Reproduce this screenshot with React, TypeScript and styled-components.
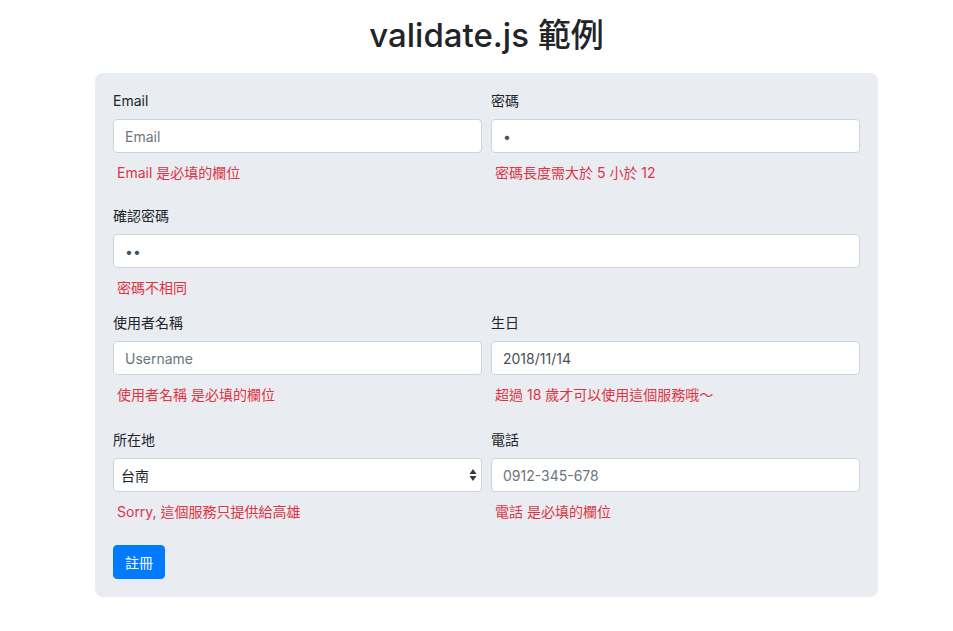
import React from "react"
import styled, { createGlobalStyle } from "styled-components"

const GlobalStyle = createGlobalStyle`
  html, body {
    margin: 0;
    padding: 0;
    background: #ffffff;
  }
  body {
    font-family: Inter, "Noto Sans CJK TC", sans-serif;
    font-size: 14px;
    color: #212529;
  }
  * {
    box-sizing: border-box;
  }
`

const Page = styled.div`
  padding: 14px 0 40px 20px;
`

const Container = styled.div`
  width: 783px;
  margin: 0 auto;
`

const Title = styled.h1`
  margin: 0 0 16px;
  font-size: 33px;
  font-weight: 500;
  line-height: 43px;
  text-align: center;
  color: #212529;
`

const Card = styled.form`
  background: #e9ecf1;
  border-radius: 8px;
  padding: 17px 18px 18px;
`

const Row = styled.div<{ $cols: number; $after: number }>`
  display: grid;
  grid-template-columns: repeat(${({ $cols }) => $cols}, 1fr);
  column-gap: 9px;
  margin-bottom: ${({ $after }) => $after}px;
`

const Group = styled.div`
  display: flex;
  flex-direction: column;
`

const Label = styled.label`
  display: block;
  line-height: 21px;
  margin-bottom: 8px;
  color: #212529;
`

const Input = styled.input`
  width: 100%;
  height: 34px;
  padding: 0 11px;
  border: 1px solid #ced4da;
  border-radius: 4px;
  background: #ffffff;
  font-family: inherit;
  font-size: 14px;
  color: #495057;
  outline: none;

  &::placeholder {
    color: #6c757d;
  }
`

const SelectWrap = styled.div`
  position: relative;
`

const Select = styled.select`
  width: 100%;
  height: 34px;
  padding: 0 24px 0 7px;
  border: 1px solid #ced4da;
  border-radius: 4px;
  background: #ffffff;
  font-family: inherit;
  font-size: 14px;
  color: #212529;
  appearance: none;
  outline: none;
`

const SelectArrows = styled.svg`
  position: absolute;
  right: 5px;
  top: 50%;
  transform: translateY(-50%);
  pointer-events: none;
`

const Error = styled.div`
  margin-top: 9px;
  padding-left: 4px;
  line-height: 21px;
  color: #dc3545;
`

const SubmitButton = styled.button`
  height: 34px;
  padding: 0 11px;
  border: 1px solid #007bff;
  border-radius: 4px;
  background: #007bff;
  color: #ffffff;
  font-family: inherit;
  font-size: 14px;
  cursor: pointer;
`

type FieldProps = {
  label: string
  error: string
  children: React.ReactNode
}

const Field = ({ label, error, children }: FieldProps) => (
  <Group>
    <Label>{label}</Label>
    {children}
    <Error>{error}</Error>
  </Group>
)

export default function App() {
  return (
    <>
      <GlobalStyle />
      <Page>
        <Container>
          <Title>validate.js 範例</Title>
          <Card onSubmit={(e) => e.preventDefault()}>
            <Row $cols={2} $after={22}>
              <Field label="Email" error="Email 是必填的欄位">
                <Input type="email" placeholder="Email" />
              </Field>
              <Field label="密碼" error="密碼長度需大於 5 小於 12">
                <Input type="password" defaultValue="a" />
              </Field>
            </Row>

            <Row $cols={1} $after={14}>
              <Field label="確認密碼" error="密碼不相同">
                <Input type="password" defaultValue="ab" />
              </Field>
            </Row>

            <Row $cols={2} $after={24}>
              <Field label="使用者名稱" error="使用者名稱 是必填的欄位">
                <Input type="text" placeholder="Username" />
              </Field>
              <Field label="生日" error="超過 18 歲才可以使用這個服務哦～">
                <Input type="text" defaultValue="2018/11/14" />
              </Field>
            </Row>

            <Row $cols={2} $after={23}>
              <Field label="所在地" error="Sorry, 這個服務只提供給高雄">
                <SelectWrap>
                  <Select defaultValue="台南">
                    <option>台北</option>
                    <option>台中</option>
                    <option>台南</option>
                    <option>高雄</option>
                  </Select>
                  <SelectArrows width="8" height="14" viewBox="0 0 8 14">
                    <path d="M4 1 L7.5 6 H0.5 Z" fill="#343a40" />
                    <path d="M4 13 L7.5 8 H0.5 Z" fill="#343a40" />
                  </SelectArrows>
                </SelectWrap>
              </Field>
              <Field label="電話" error="電話 是必填的欄位">
                <Input type="tel" placeholder="0912-345-678" />
              </Field>
            </Row>

            <SubmitButton type="submit">註冊</SubmitButton>
          </Card>
        </Container>
      </Page>
    </>
  )
}
